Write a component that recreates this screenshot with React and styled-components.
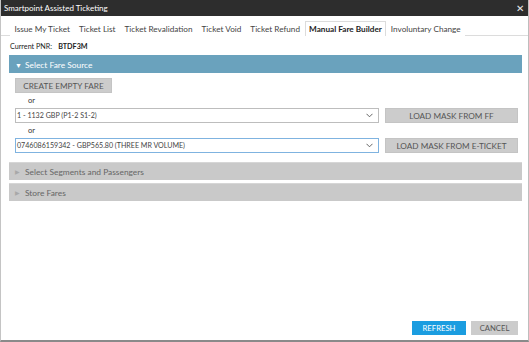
import React from 'react'
import styled, { createGlobalStyle } from 'styled-components'

const Global = createGlobalStyle`
  html, body { margin: 0; padding: 0; background: #fff; }
  body { font-family: Lato, "Open Sans", sans-serif; }
  * { box-sizing: border-box; }
`

const Window = styled.div`
  width: 529px;
  height: 342px;
  display: flex;
  flex-direction: column;
  border: 1px solid #c4c4c4;
  border-top: none;
  border-right-color: #bdbdbd;
  border-bottom: 2px solid #8a8a8a;
  overflow: hidden;
`

const TitleBar = styled.div`
  height: 16px;
  background: #2d2d2d;
  color: #fff;
  display: flex;
  align-items: center;
  justify-content: space-between;
  padding: 0 4px 0 3px;
  font-size: 8px;
  flex-shrink: 0;
`

const Close = styled.span`
  font-size: 10px;
  color: #e8e8e8;
  line-height: 1;
`

const Tabs = styled.div`
  display: flex;
  align-items: flex-end;
  height: 20px;
  padding-left: 9px;
  border-bottom: 1px solid #dcdcdc;
  flex-shrink: 0;
`

const Tab = styled.div`
  font-size: 8.2px;
  color: ${p => (p.$active ? '#222' : '#444')};
  font-weight: ${p => (p.$active ? 700 : 400)};
  padding: 0 3.5px;
  height: 15px;
  line-height: 14px;
  border: 1px solid ${p => (p.$active ? '#dcdcdc' : 'transparent')};
  border-bottom: none;
  background: #fff;
  margin-bottom: -1px;
  white-space: nowrap;
`

const Body = styled.div`
  flex: 1;
  padding: 4px 6px 0 8px;
  display: flex;
  flex-direction: column;
`

const Pnr = styled.div`
  font-size: 7.2px;
  color: #222;
  height: 15px;
  line-height: 14px;
  padding-left: 1px;
  display: flex;
  gap: 6px;
  b { font-weight: 700; }
`

const Section = styled.div`
  height: 18px;
  display: flex;
  align-items: center;
  gap: 4px;
  padding-left: 6px;
  font-size: 8.4px;
  color: ${p => (p.$open ? '#fff' : '#666')};
  background: ${p => (p.$open ? '#6aa2bd' : '#c9c9c9')};
  margin-bottom: ${p => p.$gap || 0}px;
  border-top: 1px solid ${p => (p.$open ? '#6aa2bd' : '#d6d6d6')};
`

const Arrow = styled.span`
  font-size: ${p => (p.$open ? 7 : 6)}px;
  color: ${p => (p.$open ? '#fff' : '#a8a8a8')};
  width: 6px;
`

const Source = styled.div`
  padding: 5px 0 9px 6px;
  display: flex;
  flex-direction: column;
`

const GrayButton = styled.div`
  height: 15px;
  width: ${p => p.$w}px;
  background: #cccccc;
  border: 1px solid #c4c4c4;
  color: #555;
  font-size: 8.2px;
  display: flex;
  align-items: center;
  justify-content: center;
  flex-shrink: 0;
`

const Or = styled.div`
  font-size: 7.5px;
  color: #333;
  padding-left: 13px;
  height: 15px;
  line-height: 15px;
`

const Row = styled.div`
  display: flex;
  gap: 6px;
  align-items: center;
`

const SelectBox = styled.div`
  width: 364px;
  height: 15px;
  border: 1px solid ${p => (p.$focus ? '#7fb3e0' : '#bdbdbd')};
  display: flex;
  align-items: center;
  justify-content: space-between;
  padding: 0 5px 0 1px;
  font-size: 7.1px;
  color: #444;
  background: #fff;
`

const Footer = styled.div`
  margin-top: auto;
  display: flex;
  justify-content: flex-end;
  gap: 5px;
  padding: 0 10px 5px 0;
`

const FootButton = styled.div`
  height: 14px;
  width: ${p => p.$w}px;
  background: ${p => (p.$primary ? '#1b9de0' : '#cccccc')};
  color: ${p => (p.$primary ? '#fff' : '#555')};
  font-size: 7.7px;
  display: flex;
  align-items: center;
  justify-content: center;
`

const Chevron = () => (
  <svg width="7" height="5" viewBox="0 0 7 5">
    <path d="M0.5 0.8 L3.5 3.8 L6.5 0.8" fill="none" stroke="#555" strokeWidth="0.9" />
  </svg>
)

const tabs = ['Issue My Ticket', 'Ticket List', 'Ticket Revalidation', 'Ticket Void', 'Ticket Refund', 'Manual Fare Builder', 'Involuntary Change']

export default function App() {
  return (
    <Window>
      <Global />
      <TitleBar>
        <span>Smartpoint Assisted Ticketing</span>
        <Close>✕</Close>
      </TitleBar>
      <Tabs>
        {tabs.map(t => (
          <Tab key={t} $active={t === 'Manual Fare Builder'}>{t}</Tab>
        ))}
      </Tabs>
      <Body>
        <Pnr>Current PNR: <b>BTDF3M</b></Pnr>
        <Section $open><Arrow $open>▼</Arrow>Select Fare Source</Section>
        <Source>
          <GrayButton $w={97}>CREATE EMPTY FARE</GrayButton>
          <Or>or</Or>
          <Row>
            <SelectBox>1 - 1132 GBP (P1-2 S1-2)<Chevron /></SelectBox>
            <GrayButton $w={133}>LOAD MASK FROM FF</GrayButton>
          </Row>
          <Or>or</Or>
          <Row>
            <SelectBox $focus>0746086159342 - GBP565.80 (THREE MR VOLUME)<Chevron /></SelectBox>
            <GrayButton $w={133}>LOAD MASK FROM E-TICKET</GrayButton>
          </Row>
        </Source>
        <Section $gap={3}><Arrow>▶</Arrow>Select Segments and Passengers</Section>
        <Section><Arrow>▶</Arrow>Store Fares</Section>
      </Body>
      <Footer>
        <FootButton $primary $w={54}>REFRESH</FootButton>
        <FootButton $w={47}>CANCEL</FootButton>
      </Footer>
    </Window>
  )
}
